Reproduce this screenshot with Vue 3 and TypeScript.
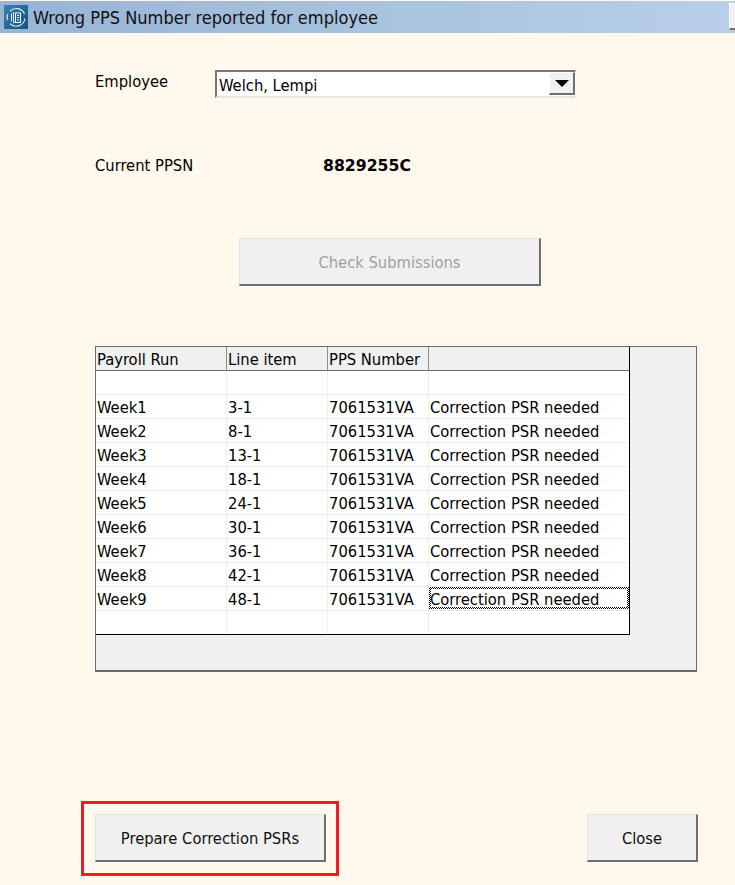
<script setup lang="ts">
const rows = [
  ['Week1', '3-1'], ['Week2', '8-1'], ['Week3', '13-1'], ['Week4', '18-1'], ['Week5', '24-1'],
  ['Week6', '30-1'], ['Week7', '36-1'], ['Week8', '42-1'], ['Week9', '48-1'],
]
</script>

<template>
  <div class="window">
    <header class="titlebar">
      <svg class="appicon" width="24" height="24" viewBox="0 0 24 24">
        <defs>
          <linearGradient id="iconbg" x1="0" y1="0" x2="1" y2="1">
            <stop offset="0" stop-color="#3f7fb4" />
            <stop offset="1" stop-color="#14507f" />
          </linearGradient>
        </defs>
        <rect width="24" height="24" fill="url(#iconbg)" />
        <path d="M6 6A9 9 0 0 1 20.5 9M21 13.5A9 9 0 0 1 6 18.8M3.6 15A9 9 0 0 1 3.6 9" fill="none" stroke="#d7e6f3" stroke-width="1.2" />
        <path d="M7.5 8.5v8M9.5 7v10.5h1.5" fill="none" stroke="#dfeaf4" stroke-width="1" />
        <rect x="11.5" y="8" width="5" height="9.5" fill="#2a6a9e" stroke="#f2f7fb" stroke-width="1" />
        <path d="M13 10.5h2M13 12.7h2M13 15h2" fill="none" stroke="#dbe8f3" stroke-width="1" />
      </svg>
      <span class="title">Wrong PPS Number reported for employee</span>
      <span class="winbtn"></span>
    </header>

    <main class="content">
      <div class="employee">
        <label class="emp-label">Employee</label>
        <div class="combo">
          <span class="combo-value">Welch, Lempi</span>
          <span class="combo-btn"><i class="arrow"></i></span>
        </div>
      </div>

      <div class="ppsn">
        <span class="ppsn-label">Current PPSN</span>
        <strong class="ppsn-value">8829255C</strong>
      </div>

      <button class="btn check" disabled>Check Submissions</button>

      <section class="gridframe">
        <div class="grid">
          <div class="cell head">Payroll Run</div>
          <div class="cell head">Line item</div>
          <div class="cell head">PPS Number</div>
          <div class="cell head"></div>

          <div class="cell"></div><div class="cell"></div><div class="cell"></div><div class="cell"></div>

          <template v-for="(r, i) in rows" :key="r[0]">
            <div class="cell">{{ r[0] }}</div>
            <div class="cell">{{ r[1] }}</div>
            <div class="cell">7061531VA</div>
            <div class="cell" :class="{ focused: i === rows.length - 1 }">Correction PSR needed</div>
          </template>

          <div class="cell last"></div><div class="cell last"></div><div class="cell last"></div><div class="cell last"></div>
        </div>
      </section>

      <footer class="actions">
        <div class="highlight">
          <button class="btn prepare">Prepare Correction PSRs</button>
        </div>
        <button class="btn close">Close</button>
      </footer>
    </main>
  </div>
</template>

<style>
html, body { margin: 0; background: #fff8ec; }
</style>

<style scoped>
.window {
  width: 735px;
  height: 885px;
  overflow: hidden;
  background: #fff8ec;
  color: #000;
  font-family: "DejaVu Sans Condensed", "DejaVu Sans", sans-serif;
  font-size: 16.4px;
}
.titlebar {
  height: 32px;
  margin-top: 1px;
  display: flex;
  align-items: center;
  padding-left: 4px;
  box-sizing: border-box;
  background: linear-gradient(90deg, #98b4d4 0%, #a9c4df 55%, #b8cfe9 100%);
  position: relative;
}
.appicon { flex: none; }
.title { margin-left: 5px; font-size: 18.05px; color: #111; }
.winbtn {
  position: absolute;
  right: 0;
  top: 2px;
  width: 6px;
  height: 27px;
  background: #f0f0f0;
  border-left: 1px solid #fff;
  border-top: 1px solid #fff;
  border-bottom: 2px solid #707070;
  box-sizing: border-box;
}
.content { padding: 37px 37px 0 95px; }
.employee { display: flex; align-items: flex-start; }
.emp-label { width: 120px; line-height: 23px; }
.combo {
  width: 361px;
  height: 28px;
  box-sizing: border-box;
  display: flex;
  background: #fff;
  border-top: 2px solid #777;
  border-left: 2px solid #777;
  border-bottom: 2px solid #e3e3e3;
  border-right: 1px solid #fdfdfd;
}
.combo-value { flex: 1; padding-left: 2px; line-height: 28px; }
.combo-btn {
  width: 26px;
  height: 23px;
  box-sizing: border-box;
  background: #f0f0f0;
  border-top: 1px solid #fff;
  border-left: 1px solid #fff;
  border-right: 2px solid #6f6f6f;
  border-bottom: 2px solid #6f6f6f;
  display: flex;
  align-items: center;
  justify-content: center;
}
.arrow {
  width: 0;
  height: 0;
  border-left: 7px solid transparent;
  border-right: 7px solid transparent;
  border-top: 7px solid #000;
}
.ppsn { display: flex; margin-top: 56px; line-height: 24px; }
.ppsn-label { width: 228px; }
.ppsn-value { font-size: 15.7px; font-weight: 700; font-family: "DejaVu Sans", sans-serif; }
.btn {
  display: block;
  box-sizing: border-box;
  background: #f0f0f0;
  font: inherit;
  color: #111;
  padding: 2px 0 0;
  border-top: 1px solid #e4e4e4;
  border-left: 1px solid #e4e4e4;
  border-right: 2px solid #6e6e6e;
  border-bottom: 2px solid #6e6e6e;
}
.check {
  width: 302px;
  height: 48px;
  margin: 60px 0 0 144px;
  color: #a0a0a0;
}
.gridframe {
  width: 602px;
  height: 326px;
  margin-top: 60px;
  box-sizing: border-box;
  background: #f0f0f0;
  border: 1px solid #6a6a6a;
  border-bottom-width: 2px;
}
.grid {
  width: 534px;
  box-sizing: border-box;
  display: grid;
  grid-template-columns: 131px 101px 101px 200px;
  grid-template-rows: repeat(11, 24px) 23px;
  background: #fff;
  border-right: 1px solid #000;
  border-bottom: 1px solid #000;
}
.cell {
  box-sizing: border-box;
  padding-left: 1px;
  line-height: 25px;
  white-space: nowrap;
  border-right: 1px solid #eeeeee;
  border-bottom: 1px solid #eeeeee;
}
.cell:nth-child(4n) { border-right: 0; }
.cell.last { border-bottom: 0; }
.head {
  background: #f0f0f0;
  border-right: 1px solid #8f8f8f;
  border-bottom: 1px solid #6a6a6a;
}
.focused { position: relative; }
.focused::after {
  content: "";
  position: absolute;
  inset: 0 0 1px 0;
  padding: 2px;
  box-sizing: border-box;
  background: repeating-conic-gradient(#000 0 25%, #fff 0 50%) 0 0 / 2px 2px;
  -webkit-mask: linear-gradient(#000 0 0) content-box exclude, linear-gradient(#000 0 0);
  mask: linear-gradient(#000 0 0) content-box exclude, linear-gradient(#000 0 0);
}
.actions {
  display: flex;
  justify-content: space-between;
  align-items: flex-start;
  margin-top: 129px;
  margin-left: -14px;
}
.highlight {
  width: 258px;
  height: 75px;
  box-sizing: border-box;
  border: 3px solid #ed1c24;
  padding: 10px 0 0 11px;
}
.prepare { width: 231px; height: 48px; }
.close { width: 111px; height: 48px; margin-top: 13px; }
</style>
